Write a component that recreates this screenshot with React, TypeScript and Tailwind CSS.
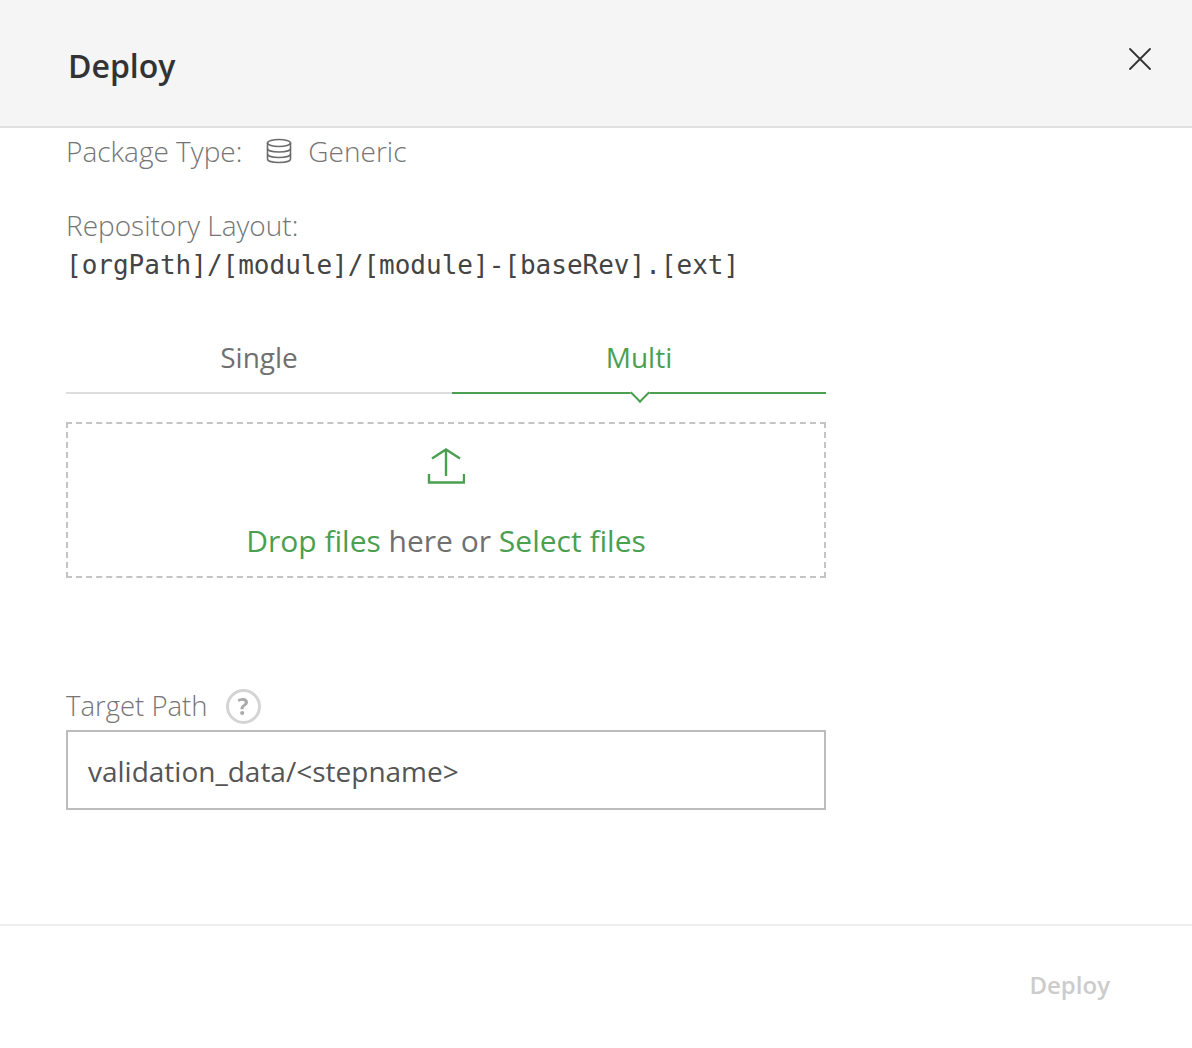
import { X } from "lucide-react";

const sans = "font-['Open_Sans',sans-serif]";

function DbIcon() {
  return (
    <svg width="26" height="26" viewBox="0 0 26 26" fill="none" stroke="#6b6b6b" strokeWidth="1.6">
      <ellipse cx="13" cy="5" rx="11.500" ry="3.500" />
      <path d="M1.500 5v16c0 2 5 3.500 11.500 3.500s11.500-1.500 11.500-3.500V5" />
      <path d="M1.500 10.500c0 2 5 3.500 11.500 3.500s11.500-1.500 11.500-3.500M1.500 16c0 2 5 3.500 11.500 3.500s11.500-1.500 11.500-3.500" />
    </svg>
  );
}

export default function App() {
  return (
    <div className={`${sans} w-[1192px] h-[1048px] bg-white flex flex-col`}>
      <header className="h-[128px] shrink-0 bg-[#f5f5f5] border-b-2 border-[#e0e0e0] flex items-center justify-between pl-[69px] pr-[32px]">
        <h1 className="text-[32px] font-semibold text-[#333] mt-[5px] -ml-[1px]">Deploy</h1>
        <X className="w-[40px] h-[40px] text-[#333] mb-[9px]" strokeWidth={1.1} />
      </header>
      <main className="flex-1 ml-[66px] w-[760px]">
        <div className="flex items-center h-[46px] text-[28px] font-light text-[#757575]">
          <span>Package Type:</span>
          <span className="ml-[24px] mr-[16px]"><DbIcon /></span>
          <span>Generic</span>
        </div>
        <div className="mt-[32px] text-[28px] leading-[38px] font-light text-[#757575]">Repository Layout:</div>
        <div className="mt-[2px] font-['DejaVu_Sans_Mono',monospace] text-[26px] leading-[38px] text-[#444]">[orgPath]/[module]/[module]-[baseRev].[ext]</div>
        <div className="mt-[52px] flex h-[58px] text-[28px] text-center">
          <div className="w-[386px] border-b-2 border-[#ddd] text-[#707070]">Single</div>
          <div className="relative flex-1 border-b-2 border-[#4aa050] text-[#4aa050]">
            Multi
            <span className="absolute left-[181px] bottom-[-8px] w-[14px] h-[14px] rotate-45 bg-white border-r-2 border-b-2 border-[#4aa050]" />
          </div>
        </div>
        <div className="mt-[28px] h-[156px] border-2 border-dashed border-[#c4c4c4] flex flex-col items-center">
          <svg className="mt-[23px]" width="38" height="38" viewBox="0 0 38 38" fill="none" stroke="#4aa050" strokeWidth="2.4">
            <path d="M19 29V3M5 11.500 19 2.500l14 9M2 27v8.500h35V27" />
          </svg>
          <p className="mt-[34px] text-[30px] leading-[44px] text-[#707070]">
            <span className="text-[#4aa050]">Drop files</span> here or <span className="text-[#4aa050]">Select files</span>
          </p>
        </div>
        <div className="mt-[108px] flex items-center h-[40px] text-[27.500px] font-light text-[#757575]">
          <span>Target Path</span>
          <span className="ml-[18px] w-[35px] h-[35px] rounded-full border-[3px] border-[#d4d4d4] flex items-center justify-center text-[23px] font-bold text-[#aaa] blur-[0.5px]">?</span>
        </div>
        <div className="mt-[4px] h-[80px] border-2 border-[#bdbdbd] flex items-center pl-[20px] pt-[1px] text-[28px] text-[#555]">validation_data/&lt;stepname&gt;</div>
      </main>
      <footer className="h-[124px] shrink-0 border-t-2 border-[#eee] flex justify-end items-center pr-[82px]">
        <span className="text-[24px] font-semibold text-[#ccc] mb-[4px]">Deploy</span>
      </footer>
    </div>
  );
}
